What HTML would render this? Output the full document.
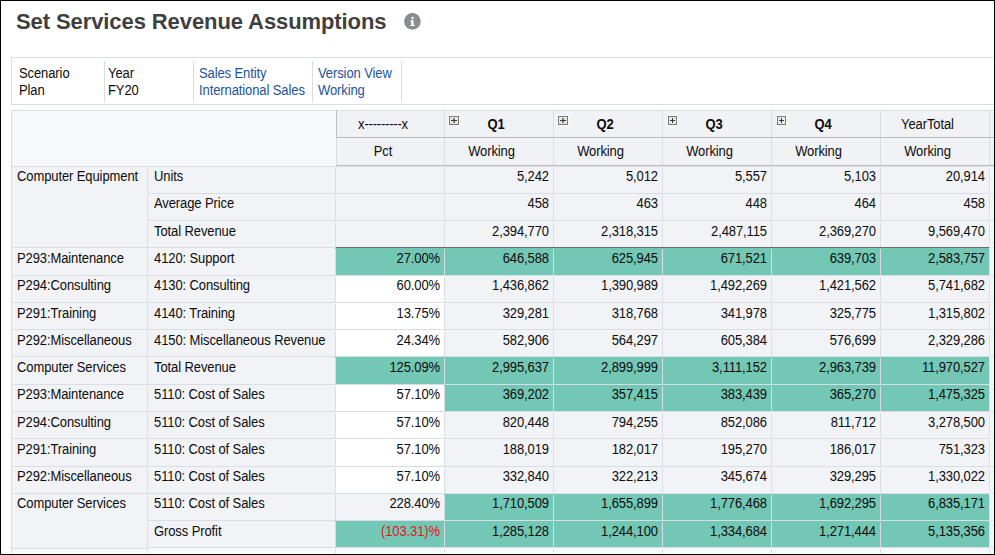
<!DOCTYPE html>
<html><head><meta charset="utf-8"><style>
html,body{margin:0;padding:0;}
body{width:995px;height:555px;overflow:hidden;position:relative;background:#fff;font-family:"Liberation Sans", sans-serif;}
.a{position:absolute;}
.t{position:absolute;white-space:nowrap;}
#frame{position:absolute;left:0;top:0;width:995px;height:555px;box-sizing:border-box;border:1px solid #000;pointer-events:none;z-index:10;}
</style></head><body>
<div class="t" style="top:8.88px;font-size:22px;line-height:25px;font-weight:700;color:#3f3f3f;left:16px;letter-spacing:-0.09px;">Set Services Revenue Assumptions</div>
<svg class="a" style="left:403px;top:12px" width="19" height="19" viewBox="0 0 19 19"><circle cx="9.4" cy="9.4" r="8.3" fill="#898c90"/><circle cx="9.5" cy="6.0" r="1.2" fill="#fff"/><path d="M7.3 8.2H10.6V13H11.9V14.1H7.1V13H8.2V9.3H7.3Z" fill="#fff"/></svg>
<div class="a" style="left:11px;top:57px;width:990px;height:48px;background:#fff;box-sizing:border-box;border:1px solid #d7dee6;"></div>
<div class="a" style="left:104px;top:61px;width:1px;height:41px;background:#d7dee6;"></div>
<div class="a" style="left:193px;top:61px;width:1px;height:41px;background:#d7dee6;"></div>
<div class="a" style="left:312px;top:61px;width:1px;height:41px;background:#d7dee6;"></div>
<div class="a" style="left:401px;top:61px;width:1px;height:41px;background:#d7dee6;"></div>
<div class="t" style="top:66.00px;font-size:13px;line-height:15px;font-weight:400;color:#0c0c0c;letter-spacing:-0.1px;transform:scaleY(1.07);transform-origin:0 12.00px;left:19px;">Scenario</div>
<div class="t" style="top:83.00px;font-size:13px;line-height:15px;font-weight:400;color:#0c0c0c;letter-spacing:-0.1px;transform:scaleY(1.07);transform-origin:0 12.00px;left:19px;">Plan</div>
<div class="t" style="top:66.00px;font-size:13px;line-height:15px;font-weight:400;color:#0c0c0c;letter-spacing:-0.1px;transform:scaleY(1.07);transform-origin:0 12.00px;left:108px;">Year</div>
<div class="t" style="top:83.00px;font-size:13px;line-height:15px;font-weight:400;color:#0c0c0c;letter-spacing:-0.1px;transform:scaleY(1.07);transform-origin:0 12.00px;left:108px;">FY20</div>
<div class="t" style="top:66.00px;font-size:13px;line-height:15px;font-weight:400;color:#1c52a0;letter-spacing:-0.1px;transform:scaleY(1.07);transform-origin:0 12.00px;left:199px;">Sales Entity</div>
<div class="t" style="top:83.00px;font-size:13px;line-height:15px;font-weight:400;color:#1c52a0;letter-spacing:-0.1px;transform:scaleY(1.07);transform-origin:0 12.00px;left:199px;">International Sales</div>
<div class="t" style="top:66.00px;font-size:13px;line-height:15px;font-weight:400;color:#1c52a0;letter-spacing:-0.1px;transform:scaleY(1.07);transform-origin:0 12.00px;left:318px;">Version View</div>
<div class="t" style="top:83.00px;font-size:13px;line-height:15px;font-weight:400;color:#1c52a0;letter-spacing:-0.1px;transform:scaleY(1.07);transform-origin:0 12.00px;left:318px;">Working</div>
<div class="a" style="left:11px;top:110px;width:325px;height:56px;background:#f6f8fb;box-sizing:border-box;border-top:1px solid #d7dee6;border-left:1px solid #d7dee6;"></div>
<div class="a" style="left:336px;top:110px;width:659px;height:55px;background:#f1f2f6;box-sizing:border-box;border-top:1px solid #d7dee6;"></div>
<div class="a" style="left:336px;top:137px;width:659px;height:1px;background:#bdbdbd;"></div>
<div class="a" style="left:336px;top:165px;width:659px;height:1px;background:#bdbdbd;"></div>
<div class="a" style="left:11px;top:166px;width:984px;height:1px;background:#d7dee6;"></div>
<div class="a" style="left:336px;top:110px;width:1px;height:27px;background:#bdbdbd;"></div>
<div class="a" style="left:336px;top:138px;width:1px;height:27px;background:#d7dee6;"></div>
<div class="a" style="left:444px;top:111px;width:1px;height:26px;background:#d7dee6;"></div>
<div class="a" style="left:444px;top:138px;width:1px;height:27px;background:#d7dee6;"></div>
<div class="a" style="left:553px;top:111px;width:1px;height:26px;background:#d7dee6;"></div>
<div class="a" style="left:553px;top:138px;width:1px;height:27px;background:#d7dee6;"></div>
<div class="a" style="left:662px;top:111px;width:1px;height:26px;background:#d7dee6;"></div>
<div class="a" style="left:662px;top:138px;width:1px;height:27px;background:#d7dee6;"></div>
<div class="a" style="left:771px;top:111px;width:1px;height:26px;background:#d7dee6;"></div>
<div class="a" style="left:771px;top:138px;width:1px;height:27px;background:#d7dee6;"></div>
<div class="a" style="left:880px;top:111px;width:1px;height:26px;background:#d7dee6;"></div>
<div class="a" style="left:880px;top:138px;width:1px;height:27px;background:#d7dee6;"></div>
<div class="a" style="left:989px;top:111px;width:1px;height:26px;background:#d7dee6;"></div>
<div class="a" style="left:989px;top:138px;width:1px;height:27px;background:#d7dee6;"></div>
<div class="t" style="top:117.00px;font-size:13px;line-height:15px;font-weight:400;color:#0c0c0c;letter-spacing:-0.1px;transform:scaleY(1.07);transform-origin:0 12.00px;left:183.0px;width:400px;text-align:center;letter-spacing:-0.2px;">x---------x</div>
<div class="t" style="top:144.00px;font-size:13px;line-height:15px;font-weight:400;color:#0c0c0c;letter-spacing:-0.1px;transform:scaleY(1.07);transform-origin:0 12.00px;left:183.0px;width:400px;text-align:center;">Pct</div>
<div class="t" style="top:117.00px;font-size:13px;line-height:15px;font-weight:700;color:#0c0c0c;letter-spacing:-0.1px;transform:scaleY(1.07);transform-origin:0 12.00px;left:296.0px;width:400px;text-align:center;">Q1</div>
<div class="a" style="left:448px;top:115px;width:12px;height:11px;background:#f8f9fb;"></div>
<div class="a" style="left:449px;top:116px;width:10px;height:9px;background:#787878;"></div>
<div class="a" style="left:450px;top:117px;width:8px;height:7px;background:#e9e9e1;"></div>
<div class="a" style="left:453px;top:118px;width:2px;height:5px;background:#7c7c78;"></div>
<div class="a" style="left:451px;top:120px;width:6px;height:1px;background:#3a3a3a;"></div>
<div class="t" style="top:144.00px;font-size:13px;line-height:15px;font-weight:400;color:#0c0c0c;letter-spacing:-0.1px;transform:scaleY(1.07);transform-origin:0 12.00px;left:291.5px;width:400px;text-align:center;">Working</div>
<div class="t" style="top:117.00px;font-size:13px;line-height:15px;font-weight:700;color:#0c0c0c;letter-spacing:-0.1px;transform:scaleY(1.07);transform-origin:0 12.00px;left:405.0px;width:400px;text-align:center;">Q2</div>
<div class="a" style="left:557px;top:115px;width:12px;height:11px;background:#f8f9fb;"></div>
<div class="a" style="left:558px;top:116px;width:10px;height:9px;background:#787878;"></div>
<div class="a" style="left:559px;top:117px;width:8px;height:7px;background:#e9e9e1;"></div>
<div class="a" style="left:562px;top:118px;width:2px;height:5px;background:#7c7c78;"></div>
<div class="a" style="left:560px;top:120px;width:6px;height:1px;background:#3a3a3a;"></div>
<div class="t" style="top:144.00px;font-size:13px;line-height:15px;font-weight:400;color:#0c0c0c;letter-spacing:-0.1px;transform:scaleY(1.07);transform-origin:0 12.00px;left:400.5px;width:400px;text-align:center;">Working</div>
<div class="t" style="top:117.00px;font-size:13px;line-height:15px;font-weight:700;color:#0c0c0c;letter-spacing:-0.1px;transform:scaleY(1.07);transform-origin:0 12.00px;left:514.0px;width:400px;text-align:center;">Q3</div>
<div class="a" style="left:667px;top:115px;width:11px;height:11px;background:#f8f9fb;"></div>
<div class="a" style="left:668px;top:116px;width:9px;height:9px;background:#787878;"></div>
<div class="a" style="left:669px;top:117px;width:7px;height:7px;background:#ebebe3;"></div>
<div class="a" style="left:672px;top:118px;width:1px;height:5px;background:#3a3a3a;"></div>
<div class="a" style="left:670px;top:120px;width:5px;height:1px;background:#3a3a3a;"></div>
<div class="t" style="top:144.00px;font-size:13px;line-height:15px;font-weight:400;color:#0c0c0c;letter-spacing:-0.1px;transform:scaleY(1.07);transform-origin:0 12.00px;left:509.5px;width:400px;text-align:center;">Working</div>
<div class="t" style="top:117.00px;font-size:13px;line-height:15px;font-weight:700;color:#0c0c0c;letter-spacing:-0.1px;transform:scaleY(1.07);transform-origin:0 12.00px;left:623.0px;width:400px;text-align:center;">Q4</div>
<div class="a" style="left:776px;top:115px;width:11px;height:11px;background:#f8f9fb;"></div>
<div class="a" style="left:777px;top:116px;width:9px;height:9px;background:#787878;"></div>
<div class="a" style="left:778px;top:117px;width:7px;height:7px;background:#ebebe3;"></div>
<div class="a" style="left:781px;top:118px;width:1px;height:5px;background:#3a3a3a;"></div>
<div class="a" style="left:779px;top:120px;width:5px;height:1px;background:#3a3a3a;"></div>
<div class="t" style="top:144.00px;font-size:13px;line-height:15px;font-weight:400;color:#0c0c0c;letter-spacing:-0.1px;transform:scaleY(1.07);transform-origin:0 12.00px;left:618.5px;width:400px;text-align:center;">Working</div>
<div class="t" style="top:117.00px;font-size:13px;line-height:15px;font-weight:400;color:#0c0c0c;letter-spacing:-0.1px;transform:scaleY(1.07);transform-origin:0 12.00px;left:727.5px;width:400px;text-align:center;">YearTotal</div>
<div class="t" style="top:144.00px;font-size:13px;line-height:15px;font-weight:400;color:#0c0c0c;letter-spacing:-0.1px;transform:scaleY(1.07);transform-origin:0 12.00px;left:727.5px;width:400px;text-align:center;">Working</div>
<div class="a" style="left:11px;top:167px;width:325px;height:381px;background:#f2f3f7;box-sizing:border-box;border-left:1px solid #d7dee6;"></div>
<div class="a" style="left:147px;top:168px;width:1px;height:25px;background:#d7dee6;"></div>
<div class="a" style="left:147px;top:195px;width:1px;height:25px;background:#d7dee6;"></div>
<div class="a" style="left:147px;top:222px;width:1px;height:25px;background:#d7dee6;"></div>
<div class="a" style="left:147px;top:249px;width:1px;height:26px;background:#d7dee6;"></div>
<div class="a" style="left:147px;top:277px;width:1px;height:25px;background:#d7dee6;"></div>
<div class="a" style="left:147px;top:304px;width:1px;height:25px;background:#d7dee6;"></div>
<div class="a" style="left:147px;top:331px;width:1px;height:25px;background:#d7dee6;"></div>
<div class="a" style="left:147px;top:358px;width:1px;height:26px;background:#d7dee6;"></div>
<div class="a" style="left:147px;top:386px;width:1px;height:25px;background:#d7dee6;"></div>
<div class="a" style="left:147px;top:413px;width:1px;height:25px;background:#d7dee6;"></div>
<div class="a" style="left:147px;top:440px;width:1px;height:26px;background:#d7dee6;"></div>
<div class="a" style="left:147px;top:468px;width:1px;height:25px;background:#d7dee6;"></div>
<div class="a" style="left:147px;top:495px;width:1px;height:25px;background:#d7dee6;"></div>
<div class="a" style="left:147px;top:522px;width:1px;height:25px;background:#d7dee6;"></div>
<div class="a" style="left:147px;top:193px;width:848px;height:1px;background:#d7dee6;"></div>
<div class="a" style="left:335px;top:167px;width:109px;height:26px;background:#f2f3f7;"></div>
<div class="a" style="left:444px;top:167px;width:109px;height:26px;background:#f2f3f7;"></div>
<div class="a" style="left:553px;top:167px;width:109px;height:26px;background:#f2f3f7;"></div>
<div class="a" style="left:662px;top:167px;width:109px;height:26px;background:#f2f3f7;"></div>
<div class="a" style="left:771px;top:167px;width:109px;height:26px;background:#f2f3f7;"></div>
<div class="a" style="left:880px;top:167px;width:109px;height:26px;background:#f2f3f7;"></div>
<div class="a" style="left:335px;top:168px;width:1px;height:25px;background:#d7dee6;"></div>
<div class="a" style="left:444px;top:168px;width:1px;height:25px;background:#d7dee6;"></div>
<div class="a" style="left:553px;top:168px;width:1px;height:25px;background:#d7dee6;"></div>
<div class="a" style="left:662px;top:168px;width:1px;height:25px;background:#d7dee6;"></div>
<div class="a" style="left:771px;top:168px;width:1px;height:25px;background:#d7dee6;"></div>
<div class="a" style="left:880px;top:168px;width:1px;height:25px;background:#d7dee6;"></div>
<div class="a" style="left:989px;top:168px;width:1px;height:25px;background:#d7dee6;"></div>
<div class="t" style="top:169.00px;font-size:13px;line-height:15px;font-weight:400;color:#0c0c0c;letter-spacing:-0.1px;transform:scaleY(1.07);transform-origin:0 12.00px;left:17px;">Computer Equipment</div>
<div class="t" style="top:169.00px;font-size:13px;line-height:15px;font-weight:400;color:#0c0c0c;letter-spacing:-0.1px;transform:scaleY(1.07);transform-origin:0 12.00px;left:154px;">Units</div>
<div class="t" style="top:169.00px;font-size:13px;line-height:15px;font-weight:400;color:#0c0c0c;letter-spacing:-0.1px;transform:scaleY(1.07);transform-origin:0 12.00px;right:446px;text-align:right;">5,242</div>
<div class="t" style="top:169.00px;font-size:13px;line-height:15px;font-weight:400;color:#0c0c0c;letter-spacing:-0.1px;transform:scaleY(1.07);transform-origin:0 12.00px;right:337px;text-align:right;">5,012</div>
<div class="t" style="top:169.00px;font-size:13px;line-height:15px;font-weight:400;color:#0c0c0c;letter-spacing:-0.1px;transform:scaleY(1.07);transform-origin:0 12.00px;right:228px;text-align:right;">5,557</div>
<div class="t" style="top:169.00px;font-size:13px;line-height:15px;font-weight:400;color:#0c0c0c;letter-spacing:-0.1px;transform:scaleY(1.07);transform-origin:0 12.00px;right:119px;text-align:right;">5,103</div>
<div class="t" style="top:169.00px;font-size:13px;line-height:15px;font-weight:400;color:#0c0c0c;letter-spacing:-0.1px;transform:scaleY(1.07);transform-origin:0 12.00px;right:10px;text-align:right;">20,914</div>
<div class="a" style="left:147px;top:220px;width:848px;height:1px;background:#d7dee6;"></div>
<div class="a" style="left:335px;top:194px;width:109px;height:26px;background:#f2f3f7;"></div>
<div class="a" style="left:444px;top:194px;width:109px;height:26px;background:#f2f3f7;"></div>
<div class="a" style="left:553px;top:194px;width:109px;height:26px;background:#f2f3f7;"></div>
<div class="a" style="left:662px;top:194px;width:109px;height:26px;background:#f2f3f7;"></div>
<div class="a" style="left:771px;top:194px;width:109px;height:26px;background:#f2f3f7;"></div>
<div class="a" style="left:880px;top:194px;width:109px;height:26px;background:#f2f3f7;"></div>
<div class="a" style="left:335px;top:195px;width:1px;height:25px;background:#d7dee6;"></div>
<div class="a" style="left:444px;top:195px;width:1px;height:25px;background:#d7dee6;"></div>
<div class="a" style="left:553px;top:195px;width:1px;height:25px;background:#d7dee6;"></div>
<div class="a" style="left:662px;top:195px;width:1px;height:25px;background:#d7dee6;"></div>
<div class="a" style="left:771px;top:195px;width:1px;height:25px;background:#d7dee6;"></div>
<div class="a" style="left:880px;top:195px;width:1px;height:25px;background:#d7dee6;"></div>
<div class="a" style="left:989px;top:195px;width:1px;height:25px;background:#d7dee6;"></div>
<div class="t" style="top:196.00px;font-size:13px;line-height:15px;font-weight:400;color:#0c0c0c;letter-spacing:-0.1px;transform:scaleY(1.07);transform-origin:0 12.00px;left:154px;">Average Price</div>
<div class="t" style="top:196.00px;font-size:13px;line-height:15px;font-weight:400;color:#0c0c0c;letter-spacing:-0.1px;transform:scaleY(1.07);transform-origin:0 12.00px;right:446px;text-align:right;">458</div>
<div class="t" style="top:196.00px;font-size:13px;line-height:15px;font-weight:400;color:#0c0c0c;letter-spacing:-0.1px;transform:scaleY(1.07);transform-origin:0 12.00px;right:337px;text-align:right;">463</div>
<div class="t" style="top:196.00px;font-size:13px;line-height:15px;font-weight:400;color:#0c0c0c;letter-spacing:-0.1px;transform:scaleY(1.07);transform-origin:0 12.00px;right:228px;text-align:right;">448</div>
<div class="t" style="top:196.00px;font-size:13px;line-height:15px;font-weight:400;color:#0c0c0c;letter-spacing:-0.1px;transform:scaleY(1.07);transform-origin:0 12.00px;right:119px;text-align:right;">464</div>
<div class="t" style="top:196.00px;font-size:13px;line-height:15px;font-weight:400;color:#0c0c0c;letter-spacing:-0.1px;transform:scaleY(1.07);transform-origin:0 12.00px;right:10px;text-align:right;">458</div>
<div class="a" style="left:11px;top:247px;width:984px;height:1px;background:#d7dee6;"></div>
<div class="a" style="left:335px;top:221px;width:109px;height:26px;background:#f2f3f7;"></div>
<div class="a" style="left:444px;top:221px;width:109px;height:26px;background:#f2f3f7;"></div>
<div class="a" style="left:553px;top:221px;width:109px;height:26px;background:#f2f3f7;"></div>
<div class="a" style="left:662px;top:221px;width:109px;height:26px;background:#f2f3f7;"></div>
<div class="a" style="left:771px;top:221px;width:109px;height:26px;background:#f2f3f7;"></div>
<div class="a" style="left:880px;top:221px;width:109px;height:26px;background:#f2f3f7;"></div>
<div class="a" style="left:335px;top:222px;width:1px;height:25px;background:#d7dee6;"></div>
<div class="a" style="left:444px;top:222px;width:1px;height:25px;background:#d7dee6;"></div>
<div class="a" style="left:553px;top:222px;width:1px;height:25px;background:#d7dee6;"></div>
<div class="a" style="left:662px;top:222px;width:1px;height:25px;background:#d7dee6;"></div>
<div class="a" style="left:771px;top:222px;width:1px;height:25px;background:#d7dee6;"></div>
<div class="a" style="left:880px;top:222px;width:1px;height:25px;background:#d7dee6;"></div>
<div class="a" style="left:989px;top:222px;width:1px;height:25px;background:#d7dee6;"></div>
<div class="t" style="top:224.00px;font-size:13px;line-height:15px;font-weight:400;color:#0c0c0c;letter-spacing:-0.1px;transform:scaleY(1.07);transform-origin:0 12.00px;left:154px;">Total Revenue</div>
<div class="t" style="top:224.00px;font-size:13px;line-height:15px;font-weight:400;color:#0c0c0c;letter-spacing:-0.1px;transform:scaleY(1.07);transform-origin:0 12.00px;right:446px;text-align:right;">2,394,770</div>
<div class="t" style="top:224.00px;font-size:13px;line-height:15px;font-weight:400;color:#0c0c0c;letter-spacing:-0.1px;transform:scaleY(1.07);transform-origin:0 12.00px;right:337px;text-align:right;">2,318,315</div>
<div class="t" style="top:224.00px;font-size:13px;line-height:15px;font-weight:400;color:#0c0c0c;letter-spacing:-0.1px;transform:scaleY(1.07);transform-origin:0 12.00px;right:228px;text-align:right;">2,487,115</div>
<div class="t" style="top:224.00px;font-size:13px;line-height:15px;font-weight:400;color:#0c0c0c;letter-spacing:-0.1px;transform:scaleY(1.07);transform-origin:0 12.00px;right:119px;text-align:right;">2,369,270</div>
<div class="t" style="top:224.00px;font-size:13px;line-height:15px;font-weight:400;color:#0c0c0c;letter-spacing:-0.1px;transform:scaleY(1.07);transform-origin:0 12.00px;right:10px;text-align:right;">9,569,470</div>
<div class="a" style="left:11px;top:275px;width:984px;height:1px;background:#d7dee6;"></div>
<div class="a" style="left:335px;top:248px;width:109px;height:27px;background:#72c7b5;"></div>
<div class="a" style="left:444px;top:248px;width:109px;height:27px;background:#72c7b5;"></div>
<div class="a" style="left:553px;top:248px;width:109px;height:27px;background:#72c7b5;"></div>
<div class="a" style="left:662px;top:248px;width:109px;height:27px;background:#72c7b5;"></div>
<div class="a" style="left:771px;top:248px;width:109px;height:27px;background:#72c7b5;"></div>
<div class="a" style="left:880px;top:248px;width:109px;height:27px;background:#72c7b5;"></div>
<div class="a" style="left:335px;top:249px;width:1px;height:26px;background:#d7dee6;"></div>
<div class="a" style="left:444px;top:249px;width:1px;height:26px;background:#d7dee6;"></div>
<div class="a" style="left:553px;top:249px;width:1px;height:26px;background:#d7dee6;"></div>
<div class="a" style="left:662px;top:249px;width:1px;height:26px;background:#d7dee6;"></div>
<div class="a" style="left:771px;top:249px;width:1px;height:26px;background:#d7dee6;"></div>
<div class="a" style="left:880px;top:249px;width:1px;height:26px;background:#d7dee6;"></div>
<div class="a" style="left:989px;top:249px;width:1px;height:26px;background:#d7dee6;"></div>
<div class="t" style="top:251.00px;font-size:13px;line-height:15px;font-weight:400;color:#0c0c0c;letter-spacing:-0.1px;transform:scaleY(1.07);transform-origin:0 12.00px;left:17px;">P293:Maintenance</div>
<div class="t" style="top:251.00px;font-size:13px;line-height:15px;font-weight:400;color:#0c0c0c;letter-spacing:-0.1px;transform:scaleY(1.07);transform-origin:0 12.00px;left:154px;">4120: Support</div>
<div class="t" style="top:251.00px;font-size:13px;line-height:15px;font-weight:400;color:#0c0c0c;letter-spacing:-0.1px;transform:scaleY(1.07);transform-origin:0 12.00px;right:555px;text-align:right;">27.00%</div>
<div class="t" style="top:251.00px;font-size:13px;line-height:15px;font-weight:400;color:#0c0c0c;letter-spacing:-0.1px;transform:scaleY(1.07);transform-origin:0 12.00px;right:446px;text-align:right;">646,588</div>
<div class="t" style="top:251.00px;font-size:13px;line-height:15px;font-weight:400;color:#0c0c0c;letter-spacing:-0.1px;transform:scaleY(1.07);transform-origin:0 12.00px;right:337px;text-align:right;">625,945</div>
<div class="t" style="top:251.00px;font-size:13px;line-height:15px;font-weight:400;color:#0c0c0c;letter-spacing:-0.1px;transform:scaleY(1.07);transform-origin:0 12.00px;right:228px;text-align:right;">671,521</div>
<div class="t" style="top:251.00px;font-size:13px;line-height:15px;font-weight:400;color:#0c0c0c;letter-spacing:-0.1px;transform:scaleY(1.07);transform-origin:0 12.00px;right:119px;text-align:right;">639,703</div>
<div class="t" style="top:251.00px;font-size:13px;line-height:15px;font-weight:400;color:#0c0c0c;letter-spacing:-0.1px;transform:scaleY(1.07);transform-origin:0 12.00px;right:10px;text-align:right;">2,583,757</div>
<div class="a" style="left:11px;top:302px;width:984px;height:1px;background:#d7dee6;"></div>
<div class="a" style="left:335px;top:276px;width:109px;height:26px;background:#ffffff;"></div>
<div class="a" style="left:444px;top:276px;width:109px;height:26px;background:#f2f3f7;"></div>
<div class="a" style="left:553px;top:276px;width:109px;height:26px;background:#f2f3f7;"></div>
<div class="a" style="left:662px;top:276px;width:109px;height:26px;background:#f2f3f7;"></div>
<div class="a" style="left:771px;top:276px;width:109px;height:26px;background:#f2f3f7;"></div>
<div class="a" style="left:880px;top:276px;width:109px;height:26px;background:#f2f3f7;"></div>
<div class="a" style="left:335px;top:277px;width:1px;height:25px;background:#d7dee6;"></div>
<div class="a" style="left:444px;top:277px;width:1px;height:25px;background:#d7dee6;"></div>
<div class="a" style="left:553px;top:277px;width:1px;height:25px;background:#d7dee6;"></div>
<div class="a" style="left:662px;top:277px;width:1px;height:25px;background:#d7dee6;"></div>
<div class="a" style="left:771px;top:277px;width:1px;height:25px;background:#d7dee6;"></div>
<div class="a" style="left:880px;top:277px;width:1px;height:25px;background:#d7dee6;"></div>
<div class="a" style="left:989px;top:277px;width:1px;height:25px;background:#d7dee6;"></div>
<div class="t" style="top:278.00px;font-size:13px;line-height:15px;font-weight:400;color:#0c0c0c;letter-spacing:-0.1px;transform:scaleY(1.07);transform-origin:0 12.00px;left:17px;">P294:Consulting</div>
<div class="t" style="top:278.00px;font-size:13px;line-height:15px;font-weight:400;color:#0c0c0c;letter-spacing:-0.1px;transform:scaleY(1.07);transform-origin:0 12.00px;left:154px;">4130: Consulting</div>
<div class="t" style="top:278.00px;font-size:13px;line-height:15px;font-weight:400;color:#0c0c0c;letter-spacing:-0.1px;transform:scaleY(1.07);transform-origin:0 12.00px;right:555px;text-align:right;">60.00%</div>
<div class="t" style="top:278.00px;font-size:13px;line-height:15px;font-weight:400;color:#0c0c0c;letter-spacing:-0.1px;transform:scaleY(1.07);transform-origin:0 12.00px;right:446px;text-align:right;">1,436,862</div>
<div class="t" style="top:278.00px;font-size:13px;line-height:15px;font-weight:400;color:#0c0c0c;letter-spacing:-0.1px;transform:scaleY(1.07);transform-origin:0 12.00px;right:337px;text-align:right;">1,390,989</div>
<div class="t" style="top:278.00px;font-size:13px;line-height:15px;font-weight:400;color:#0c0c0c;letter-spacing:-0.1px;transform:scaleY(1.07);transform-origin:0 12.00px;right:228px;text-align:right;">1,492,269</div>
<div class="t" style="top:278.00px;font-size:13px;line-height:15px;font-weight:400;color:#0c0c0c;letter-spacing:-0.1px;transform:scaleY(1.07);transform-origin:0 12.00px;right:119px;text-align:right;">1,421,562</div>
<div class="t" style="top:278.00px;font-size:13px;line-height:15px;font-weight:400;color:#0c0c0c;letter-spacing:-0.1px;transform:scaleY(1.07);transform-origin:0 12.00px;right:10px;text-align:right;">5,741,682</div>
<div class="a" style="left:11px;top:329px;width:984px;height:1px;background:#d7dee6;"></div>
<div class="a" style="left:335px;top:303px;width:109px;height:26px;background:#ffffff;"></div>
<div class="a" style="left:444px;top:303px;width:109px;height:26px;background:#f2f3f7;"></div>
<div class="a" style="left:553px;top:303px;width:109px;height:26px;background:#f2f3f7;"></div>
<div class="a" style="left:662px;top:303px;width:109px;height:26px;background:#f2f3f7;"></div>
<div class="a" style="left:771px;top:303px;width:109px;height:26px;background:#f2f3f7;"></div>
<div class="a" style="left:880px;top:303px;width:109px;height:26px;background:#f2f3f7;"></div>
<div class="a" style="left:335px;top:304px;width:1px;height:25px;background:#d7dee6;"></div>
<div class="a" style="left:444px;top:304px;width:1px;height:25px;background:#d7dee6;"></div>
<div class="a" style="left:553px;top:304px;width:1px;height:25px;background:#d7dee6;"></div>
<div class="a" style="left:662px;top:304px;width:1px;height:25px;background:#d7dee6;"></div>
<div class="a" style="left:771px;top:304px;width:1px;height:25px;background:#d7dee6;"></div>
<div class="a" style="left:880px;top:304px;width:1px;height:25px;background:#d7dee6;"></div>
<div class="a" style="left:989px;top:304px;width:1px;height:25px;background:#d7dee6;"></div>
<div class="t" style="top:306.00px;font-size:13px;line-height:15px;font-weight:400;color:#0c0c0c;letter-spacing:-0.1px;transform:scaleY(1.07);transform-origin:0 12.00px;left:17px;">P291:Training</div>
<div class="t" style="top:306.00px;font-size:13px;line-height:15px;font-weight:400;color:#0c0c0c;letter-spacing:-0.1px;transform:scaleY(1.07);transform-origin:0 12.00px;left:154px;">4140: Training</div>
<div class="t" style="top:306.00px;font-size:13px;line-height:15px;font-weight:400;color:#0c0c0c;letter-spacing:-0.1px;transform:scaleY(1.07);transform-origin:0 12.00px;right:555px;text-align:right;">13.75%</div>
<div class="t" style="top:306.00px;font-size:13px;line-height:15px;font-weight:400;color:#0c0c0c;letter-spacing:-0.1px;transform:scaleY(1.07);transform-origin:0 12.00px;right:446px;text-align:right;">329,281</div>
<div class="t" style="top:306.00px;font-size:13px;line-height:15px;font-weight:400;color:#0c0c0c;letter-spacing:-0.1px;transform:scaleY(1.07);transform-origin:0 12.00px;right:337px;text-align:right;">318,768</div>
<div class="t" style="top:306.00px;font-size:13px;line-height:15px;font-weight:400;color:#0c0c0c;letter-spacing:-0.1px;transform:scaleY(1.07);transform-origin:0 12.00px;right:228px;text-align:right;">341,978</div>
<div class="t" style="top:306.00px;font-size:13px;line-height:15px;font-weight:400;color:#0c0c0c;letter-spacing:-0.1px;transform:scaleY(1.07);transform-origin:0 12.00px;right:119px;text-align:right;">325,775</div>
<div class="t" style="top:306.00px;font-size:13px;line-height:15px;font-weight:400;color:#0c0c0c;letter-spacing:-0.1px;transform:scaleY(1.07);transform-origin:0 12.00px;right:10px;text-align:right;">1,315,802</div>
<div class="a" style="left:11px;top:356px;width:984px;height:1px;background:#d7dee6;"></div>
<div class="a" style="left:335px;top:330px;width:109px;height:26px;background:#ffffff;"></div>
<div class="a" style="left:444px;top:330px;width:109px;height:26px;background:#f2f3f7;"></div>
<div class="a" style="left:553px;top:330px;width:109px;height:26px;background:#f2f3f7;"></div>
<div class="a" style="left:662px;top:330px;width:109px;height:26px;background:#f2f3f7;"></div>
<div class="a" style="left:771px;top:330px;width:109px;height:26px;background:#f2f3f7;"></div>
<div class="a" style="left:880px;top:330px;width:109px;height:26px;background:#f2f3f7;"></div>
<div class="a" style="left:335px;top:331px;width:1px;height:25px;background:#d7dee6;"></div>
<div class="a" style="left:444px;top:331px;width:1px;height:25px;background:#d7dee6;"></div>
<div class="a" style="left:553px;top:331px;width:1px;height:25px;background:#d7dee6;"></div>
<div class="a" style="left:662px;top:331px;width:1px;height:25px;background:#d7dee6;"></div>
<div class="a" style="left:771px;top:331px;width:1px;height:25px;background:#d7dee6;"></div>
<div class="a" style="left:880px;top:331px;width:1px;height:25px;background:#d7dee6;"></div>
<div class="a" style="left:989px;top:331px;width:1px;height:25px;background:#d7dee6;"></div>
<div class="t" style="top:333.00px;font-size:13px;line-height:15px;font-weight:400;color:#0c0c0c;letter-spacing:-0.1px;transform:scaleY(1.07);transform-origin:0 12.00px;left:17px;">P292:Miscellaneous</div>
<div class="t" style="top:333.00px;font-size:13px;line-height:15px;font-weight:400;color:#0c0c0c;letter-spacing:-0.1px;transform:scaleY(1.07);transform-origin:0 12.00px;left:154px;">4150: Miscellaneous Revenue</div>
<div class="t" style="top:333.00px;font-size:13px;line-height:15px;font-weight:400;color:#0c0c0c;letter-spacing:-0.1px;transform:scaleY(1.07);transform-origin:0 12.00px;right:555px;text-align:right;">24.34%</div>
<div class="t" style="top:333.00px;font-size:13px;line-height:15px;font-weight:400;color:#0c0c0c;letter-spacing:-0.1px;transform:scaleY(1.07);transform-origin:0 12.00px;right:446px;text-align:right;">582,906</div>
<div class="t" style="top:333.00px;font-size:13px;line-height:15px;font-weight:400;color:#0c0c0c;letter-spacing:-0.1px;transform:scaleY(1.07);transform-origin:0 12.00px;right:337px;text-align:right;">564,297</div>
<div class="t" style="top:333.00px;font-size:13px;line-height:15px;font-weight:400;color:#0c0c0c;letter-spacing:-0.1px;transform:scaleY(1.07);transform-origin:0 12.00px;right:228px;text-align:right;">605,384</div>
<div class="t" style="top:333.00px;font-size:13px;line-height:15px;font-weight:400;color:#0c0c0c;letter-spacing:-0.1px;transform:scaleY(1.07);transform-origin:0 12.00px;right:119px;text-align:right;">576,699</div>
<div class="t" style="top:333.00px;font-size:13px;line-height:15px;font-weight:400;color:#0c0c0c;letter-spacing:-0.1px;transform:scaleY(1.07);transform-origin:0 12.00px;right:10px;text-align:right;">2,329,286</div>
<div class="a" style="left:11px;top:384px;width:984px;height:1px;background:#d7dee6;"></div>
<div class="a" style="left:335px;top:357px;width:109px;height:27px;background:#72c7b5;"></div>
<div class="a" style="left:444px;top:357px;width:109px;height:27px;background:#72c7b5;"></div>
<div class="a" style="left:553px;top:357px;width:109px;height:27px;background:#72c7b5;"></div>
<div class="a" style="left:662px;top:357px;width:109px;height:27px;background:#72c7b5;"></div>
<div class="a" style="left:771px;top:357px;width:109px;height:27px;background:#72c7b5;"></div>
<div class="a" style="left:880px;top:357px;width:109px;height:27px;background:#72c7b5;"></div>
<div class="a" style="left:335px;top:358px;width:1px;height:26px;background:#d7dee6;"></div>
<div class="a" style="left:444px;top:358px;width:1px;height:26px;background:#d7dee6;"></div>
<div class="a" style="left:553px;top:358px;width:1px;height:26px;background:#d7dee6;"></div>
<div class="a" style="left:662px;top:358px;width:1px;height:26px;background:#d7dee6;"></div>
<div class="a" style="left:771px;top:358px;width:1px;height:26px;background:#d7dee6;"></div>
<div class="a" style="left:880px;top:358px;width:1px;height:26px;background:#d7dee6;"></div>
<div class="a" style="left:989px;top:358px;width:1px;height:26px;background:#d7dee6;"></div>
<div class="t" style="top:360.00px;font-size:13px;line-height:15px;font-weight:400;color:#0c0c0c;letter-spacing:-0.1px;transform:scaleY(1.07);transform-origin:0 12.00px;left:17px;">Computer Services</div>
<div class="t" style="top:360.00px;font-size:13px;line-height:15px;font-weight:400;color:#0c0c0c;letter-spacing:-0.1px;transform:scaleY(1.07);transform-origin:0 12.00px;left:154px;">Total Revenue</div>
<div class="t" style="top:360.00px;font-size:13px;line-height:15px;font-weight:400;color:#0c0c0c;letter-spacing:-0.1px;transform:scaleY(1.07);transform-origin:0 12.00px;right:555px;text-align:right;">125.09%</div>
<div class="t" style="top:360.00px;font-size:13px;line-height:15px;font-weight:400;color:#0c0c0c;letter-spacing:-0.1px;transform:scaleY(1.07);transform-origin:0 12.00px;right:446px;text-align:right;">2,995,637</div>
<div class="t" style="top:360.00px;font-size:13px;line-height:15px;font-weight:400;color:#0c0c0c;letter-spacing:-0.1px;transform:scaleY(1.07);transform-origin:0 12.00px;right:337px;text-align:right;">2,899,999</div>
<div class="t" style="top:360.00px;font-size:13px;line-height:15px;font-weight:400;color:#0c0c0c;letter-spacing:-0.1px;transform:scaleY(1.07);transform-origin:0 12.00px;right:228px;text-align:right;">3,111,152</div>
<div class="t" style="top:360.00px;font-size:13px;line-height:15px;font-weight:400;color:#0c0c0c;letter-spacing:-0.1px;transform:scaleY(1.07);transform-origin:0 12.00px;right:119px;text-align:right;">2,963,739</div>
<div class="t" style="top:360.00px;font-size:13px;line-height:15px;font-weight:400;color:#0c0c0c;letter-spacing:-0.1px;transform:scaleY(1.07);transform-origin:0 12.00px;right:10px;text-align:right;">11,970,527</div>
<div class="a" style="left:11px;top:411px;width:984px;height:1px;background:#d7dee6;"></div>
<div class="a" style="left:335px;top:385px;width:109px;height:26px;background:#ffffff;"></div>
<div class="a" style="left:444px;top:385px;width:109px;height:26px;background:#72c7b5;"></div>
<div class="a" style="left:553px;top:385px;width:109px;height:26px;background:#72c7b5;"></div>
<div class="a" style="left:662px;top:385px;width:109px;height:26px;background:#72c7b5;"></div>
<div class="a" style="left:771px;top:385px;width:109px;height:26px;background:#72c7b5;"></div>
<div class="a" style="left:880px;top:385px;width:109px;height:26px;background:#72c7b5;"></div>
<div class="a" style="left:335px;top:386px;width:1px;height:25px;background:#d7dee6;"></div>
<div class="a" style="left:444px;top:386px;width:1px;height:25px;background:#d7dee6;"></div>
<div class="a" style="left:553px;top:386px;width:1px;height:25px;background:#d7dee6;"></div>
<div class="a" style="left:662px;top:386px;width:1px;height:25px;background:#d7dee6;"></div>
<div class="a" style="left:771px;top:386px;width:1px;height:25px;background:#d7dee6;"></div>
<div class="a" style="left:880px;top:386px;width:1px;height:25px;background:#d7dee6;"></div>
<div class="a" style="left:989px;top:386px;width:1px;height:25px;background:#d7dee6;"></div>
<div class="t" style="top:387.00px;font-size:13px;line-height:15px;font-weight:400;color:#0c0c0c;letter-spacing:-0.1px;transform:scaleY(1.07);transform-origin:0 12.00px;left:17px;">P293:Maintenance</div>
<div class="t" style="top:387.00px;font-size:13px;line-height:15px;font-weight:400;color:#0c0c0c;letter-spacing:-0.1px;transform:scaleY(1.07);transform-origin:0 12.00px;left:154px;">5110: Cost of Sales</div>
<div class="t" style="top:387.00px;font-size:13px;line-height:15px;font-weight:400;color:#0c0c0c;letter-spacing:-0.1px;transform:scaleY(1.07);transform-origin:0 12.00px;right:555px;text-align:right;">57.10%</div>
<div class="t" style="top:387.00px;font-size:13px;line-height:15px;font-weight:400;color:#0c0c0c;letter-spacing:-0.1px;transform:scaleY(1.07);transform-origin:0 12.00px;right:446px;text-align:right;">369,202</div>
<div class="t" style="top:387.00px;font-size:13px;line-height:15px;font-weight:400;color:#0c0c0c;letter-spacing:-0.1px;transform:scaleY(1.07);transform-origin:0 12.00px;right:337px;text-align:right;">357,415</div>
<div class="t" style="top:387.00px;font-size:13px;line-height:15px;font-weight:400;color:#0c0c0c;letter-spacing:-0.1px;transform:scaleY(1.07);transform-origin:0 12.00px;right:228px;text-align:right;">383,439</div>
<div class="t" style="top:387.00px;font-size:13px;line-height:15px;font-weight:400;color:#0c0c0c;letter-spacing:-0.1px;transform:scaleY(1.07);transform-origin:0 12.00px;right:119px;text-align:right;">365,270</div>
<div class="t" style="top:387.00px;font-size:13px;line-height:15px;font-weight:400;color:#0c0c0c;letter-spacing:-0.1px;transform:scaleY(1.07);transform-origin:0 12.00px;right:10px;text-align:right;">1,475,325</div>
<div class="a" style="left:11px;top:438px;width:984px;height:1px;background:#d7dee6;"></div>
<div class="a" style="left:335px;top:412px;width:109px;height:26px;background:#ffffff;"></div>
<div class="a" style="left:444px;top:412px;width:109px;height:26px;background:#f2f3f7;"></div>
<div class="a" style="left:553px;top:412px;width:109px;height:26px;background:#f2f3f7;"></div>
<div class="a" style="left:662px;top:412px;width:109px;height:26px;background:#f2f3f7;"></div>
<div class="a" style="left:771px;top:412px;width:109px;height:26px;background:#f2f3f7;"></div>
<div class="a" style="left:880px;top:412px;width:109px;height:26px;background:#f2f3f7;"></div>
<div class="a" style="left:335px;top:413px;width:1px;height:25px;background:#d7dee6;"></div>
<div class="a" style="left:444px;top:413px;width:1px;height:25px;background:#d7dee6;"></div>
<div class="a" style="left:553px;top:413px;width:1px;height:25px;background:#d7dee6;"></div>
<div class="a" style="left:662px;top:413px;width:1px;height:25px;background:#d7dee6;"></div>
<div class="a" style="left:771px;top:413px;width:1px;height:25px;background:#d7dee6;"></div>
<div class="a" style="left:880px;top:413px;width:1px;height:25px;background:#d7dee6;"></div>
<div class="a" style="left:989px;top:413px;width:1px;height:25px;background:#d7dee6;"></div>
<div class="t" style="top:415.00px;font-size:13px;line-height:15px;font-weight:400;color:#0c0c0c;letter-spacing:-0.1px;transform:scaleY(1.07);transform-origin:0 12.00px;left:17px;">P294:Consulting</div>
<div class="t" style="top:415.00px;font-size:13px;line-height:15px;font-weight:400;color:#0c0c0c;letter-spacing:-0.1px;transform:scaleY(1.07);transform-origin:0 12.00px;left:154px;">5110: Cost of Sales</div>
<div class="t" style="top:415.00px;font-size:13px;line-height:15px;font-weight:400;color:#0c0c0c;letter-spacing:-0.1px;transform:scaleY(1.07);transform-origin:0 12.00px;right:555px;text-align:right;">57.10%</div>
<div class="t" style="top:415.00px;font-size:13px;line-height:15px;font-weight:400;color:#0c0c0c;letter-spacing:-0.1px;transform:scaleY(1.07);transform-origin:0 12.00px;right:446px;text-align:right;">820,448</div>
<div class="t" style="top:415.00px;font-size:13px;line-height:15px;font-weight:400;color:#0c0c0c;letter-spacing:-0.1px;transform:scaleY(1.07);transform-origin:0 12.00px;right:337px;text-align:right;">794,255</div>
<div class="t" style="top:415.00px;font-size:13px;line-height:15px;font-weight:400;color:#0c0c0c;letter-spacing:-0.1px;transform:scaleY(1.07);transform-origin:0 12.00px;right:228px;text-align:right;">852,086</div>
<div class="t" style="top:415.00px;font-size:13px;line-height:15px;font-weight:400;color:#0c0c0c;letter-spacing:-0.1px;transform:scaleY(1.07);transform-origin:0 12.00px;right:119px;text-align:right;">811,712</div>
<div class="t" style="top:415.00px;font-size:13px;line-height:15px;font-weight:400;color:#0c0c0c;letter-spacing:-0.1px;transform:scaleY(1.07);transform-origin:0 12.00px;right:10px;text-align:right;">3,278,500</div>
<div class="a" style="left:11px;top:466px;width:984px;height:1px;background:#d7dee6;"></div>
<div class="a" style="left:335px;top:439px;width:109px;height:27px;background:#ffffff;"></div>
<div class="a" style="left:444px;top:439px;width:109px;height:27px;background:#f2f3f7;"></div>
<div class="a" style="left:553px;top:439px;width:109px;height:27px;background:#f2f3f7;"></div>
<div class="a" style="left:662px;top:439px;width:109px;height:27px;background:#f2f3f7;"></div>
<div class="a" style="left:771px;top:439px;width:109px;height:27px;background:#f2f3f7;"></div>
<div class="a" style="left:880px;top:439px;width:109px;height:27px;background:#f2f3f7;"></div>
<div class="a" style="left:335px;top:440px;width:1px;height:26px;background:#d7dee6;"></div>
<div class="a" style="left:444px;top:440px;width:1px;height:26px;background:#d7dee6;"></div>
<div class="a" style="left:553px;top:440px;width:1px;height:26px;background:#d7dee6;"></div>
<div class="a" style="left:662px;top:440px;width:1px;height:26px;background:#d7dee6;"></div>
<div class="a" style="left:771px;top:440px;width:1px;height:26px;background:#d7dee6;"></div>
<div class="a" style="left:880px;top:440px;width:1px;height:26px;background:#d7dee6;"></div>
<div class="a" style="left:989px;top:440px;width:1px;height:26px;background:#d7dee6;"></div>
<div class="t" style="top:442.00px;font-size:13px;line-height:15px;font-weight:400;color:#0c0c0c;letter-spacing:-0.1px;transform:scaleY(1.07);transform-origin:0 12.00px;left:17px;">P291:Training</div>
<div class="t" style="top:442.00px;font-size:13px;line-height:15px;font-weight:400;color:#0c0c0c;letter-spacing:-0.1px;transform:scaleY(1.07);transform-origin:0 12.00px;left:154px;">5110: Cost of Sales</div>
<div class="t" style="top:442.00px;font-size:13px;line-height:15px;font-weight:400;color:#0c0c0c;letter-spacing:-0.1px;transform:scaleY(1.07);transform-origin:0 12.00px;right:555px;text-align:right;">57.10%</div>
<div class="t" style="top:442.00px;font-size:13px;line-height:15px;font-weight:400;color:#0c0c0c;letter-spacing:-0.1px;transform:scaleY(1.07);transform-origin:0 12.00px;right:446px;text-align:right;">188,019</div>
<div class="t" style="top:442.00px;font-size:13px;line-height:15px;font-weight:400;color:#0c0c0c;letter-spacing:-0.1px;transform:scaleY(1.07);transform-origin:0 12.00px;right:337px;text-align:right;">182,017</div>
<div class="t" style="top:442.00px;font-size:13px;line-height:15px;font-weight:400;color:#0c0c0c;letter-spacing:-0.1px;transform:scaleY(1.07);transform-origin:0 12.00px;right:228px;text-align:right;">195,270</div>
<div class="t" style="top:442.00px;font-size:13px;line-height:15px;font-weight:400;color:#0c0c0c;letter-spacing:-0.1px;transform:scaleY(1.07);transform-origin:0 12.00px;right:119px;text-align:right;">186,017</div>
<div class="t" style="top:442.00px;font-size:13px;line-height:15px;font-weight:400;color:#0c0c0c;letter-spacing:-0.1px;transform:scaleY(1.07);transform-origin:0 12.00px;right:10px;text-align:right;">751,323</div>
<div class="a" style="left:11px;top:493px;width:984px;height:1px;background:#d7dee6;"></div>
<div class="a" style="left:335px;top:467px;width:109px;height:26px;background:#ffffff;"></div>
<div class="a" style="left:444px;top:467px;width:109px;height:26px;background:#f2f3f7;"></div>
<div class="a" style="left:553px;top:467px;width:109px;height:26px;background:#f2f3f7;"></div>
<div class="a" style="left:662px;top:467px;width:109px;height:26px;background:#f2f3f7;"></div>
<div class="a" style="left:771px;top:467px;width:109px;height:26px;background:#f2f3f7;"></div>
<div class="a" style="left:880px;top:467px;width:109px;height:26px;background:#f2f3f7;"></div>
<div class="a" style="left:335px;top:468px;width:1px;height:25px;background:#d7dee6;"></div>
<div class="a" style="left:444px;top:468px;width:1px;height:25px;background:#d7dee6;"></div>
<div class="a" style="left:553px;top:468px;width:1px;height:25px;background:#d7dee6;"></div>
<div class="a" style="left:662px;top:468px;width:1px;height:25px;background:#d7dee6;"></div>
<div class="a" style="left:771px;top:468px;width:1px;height:25px;background:#d7dee6;"></div>
<div class="a" style="left:880px;top:468px;width:1px;height:25px;background:#d7dee6;"></div>
<div class="a" style="left:989px;top:468px;width:1px;height:25px;background:#d7dee6;"></div>
<div class="t" style="top:469.00px;font-size:13px;line-height:15px;font-weight:400;color:#0c0c0c;letter-spacing:-0.1px;transform:scaleY(1.07);transform-origin:0 12.00px;left:17px;">P292:Miscellaneous</div>
<div class="t" style="top:469.00px;font-size:13px;line-height:15px;font-weight:400;color:#0c0c0c;letter-spacing:-0.1px;transform:scaleY(1.07);transform-origin:0 12.00px;left:154px;">5110: Cost of Sales</div>
<div class="t" style="top:469.00px;font-size:13px;line-height:15px;font-weight:400;color:#0c0c0c;letter-spacing:-0.1px;transform:scaleY(1.07);transform-origin:0 12.00px;right:555px;text-align:right;">57.10%</div>
<div class="t" style="top:469.00px;font-size:13px;line-height:15px;font-weight:400;color:#0c0c0c;letter-spacing:-0.1px;transform:scaleY(1.07);transform-origin:0 12.00px;right:446px;text-align:right;">332,840</div>
<div class="t" style="top:469.00px;font-size:13px;line-height:15px;font-weight:400;color:#0c0c0c;letter-spacing:-0.1px;transform:scaleY(1.07);transform-origin:0 12.00px;right:337px;text-align:right;">322,213</div>
<div class="t" style="top:469.00px;font-size:13px;line-height:15px;font-weight:400;color:#0c0c0c;letter-spacing:-0.1px;transform:scaleY(1.07);transform-origin:0 12.00px;right:228px;text-align:right;">345,674</div>
<div class="t" style="top:469.00px;font-size:13px;line-height:15px;font-weight:400;color:#0c0c0c;letter-spacing:-0.1px;transform:scaleY(1.07);transform-origin:0 12.00px;right:119px;text-align:right;">329,295</div>
<div class="t" style="top:469.00px;font-size:13px;line-height:15px;font-weight:400;color:#0c0c0c;letter-spacing:-0.1px;transform:scaleY(1.07);transform-origin:0 12.00px;right:10px;text-align:right;">1,330,022</div>
<div class="a" style="left:147px;top:520px;width:848px;height:1px;background:#d7dee6;"></div>
<div class="a" style="left:335px;top:494px;width:109px;height:26px;background:#f2f3f7;"></div>
<div class="a" style="left:444px;top:494px;width:109px;height:26px;background:#72c7b5;"></div>
<div class="a" style="left:553px;top:494px;width:109px;height:26px;background:#72c7b5;"></div>
<div class="a" style="left:662px;top:494px;width:109px;height:26px;background:#72c7b5;"></div>
<div class="a" style="left:771px;top:494px;width:109px;height:26px;background:#72c7b5;"></div>
<div class="a" style="left:880px;top:494px;width:109px;height:26px;background:#72c7b5;"></div>
<div class="a" style="left:335px;top:495px;width:1px;height:25px;background:#d7dee6;"></div>
<div class="a" style="left:444px;top:495px;width:1px;height:25px;background:#d7dee6;"></div>
<div class="a" style="left:553px;top:495px;width:1px;height:25px;background:#d7dee6;"></div>
<div class="a" style="left:662px;top:495px;width:1px;height:25px;background:#d7dee6;"></div>
<div class="a" style="left:771px;top:495px;width:1px;height:25px;background:#d7dee6;"></div>
<div class="a" style="left:880px;top:495px;width:1px;height:25px;background:#d7dee6;"></div>
<div class="a" style="left:989px;top:495px;width:1px;height:25px;background:#d7dee6;"></div>
<div class="t" style="top:496.00px;font-size:13px;line-height:15px;font-weight:400;color:#0c0c0c;letter-spacing:-0.1px;transform:scaleY(1.07);transform-origin:0 12.00px;left:17px;">Computer Services</div>
<div class="t" style="top:496.00px;font-size:13px;line-height:15px;font-weight:400;color:#0c0c0c;letter-spacing:-0.1px;transform:scaleY(1.07);transform-origin:0 12.00px;left:154px;">5110: Cost of Sales</div>
<div class="t" style="top:496.00px;font-size:13px;line-height:15px;font-weight:400;color:#0c0c0c;letter-spacing:-0.1px;transform:scaleY(1.07);transform-origin:0 12.00px;right:555px;text-align:right;">228.40%</div>
<div class="t" style="top:496.00px;font-size:13px;line-height:15px;font-weight:400;color:#0c0c0c;letter-spacing:-0.1px;transform:scaleY(1.07);transform-origin:0 12.00px;right:446px;text-align:right;">1,710,509</div>
<div class="t" style="top:496.00px;font-size:13px;line-height:15px;font-weight:400;color:#0c0c0c;letter-spacing:-0.1px;transform:scaleY(1.07);transform-origin:0 12.00px;right:337px;text-align:right;">1,655,899</div>
<div class="t" style="top:496.00px;font-size:13px;line-height:15px;font-weight:400;color:#0c0c0c;letter-spacing:-0.1px;transform:scaleY(1.07);transform-origin:0 12.00px;right:228px;text-align:right;">1,776,468</div>
<div class="t" style="top:496.00px;font-size:13px;line-height:15px;font-weight:400;color:#0c0c0c;letter-spacing:-0.1px;transform:scaleY(1.07);transform-origin:0 12.00px;right:119px;text-align:right;">1,692,295</div>
<div class="t" style="top:496.00px;font-size:13px;line-height:15px;font-weight:400;color:#0c0c0c;letter-spacing:-0.1px;transform:scaleY(1.07);transform-origin:0 12.00px;right:10px;text-align:right;">6,835,171</div>
<div class="a" style="left:147px;top:547px;width:848px;height:1px;background:#d7dee6;"></div>
<div class="a" style="left:335px;top:521px;width:109px;height:26px;background:#72c7b5;"></div>
<div class="a" style="left:444px;top:521px;width:109px;height:26px;background:#72c7b5;"></div>
<div class="a" style="left:553px;top:521px;width:109px;height:26px;background:#72c7b5;"></div>
<div class="a" style="left:662px;top:521px;width:109px;height:26px;background:#72c7b5;"></div>
<div class="a" style="left:771px;top:521px;width:109px;height:26px;background:#72c7b5;"></div>
<div class="a" style="left:880px;top:521px;width:109px;height:26px;background:#72c7b5;"></div>
<div class="a" style="left:335px;top:522px;width:1px;height:25px;background:#d7dee6;"></div>
<div class="a" style="left:444px;top:522px;width:1px;height:25px;background:#d7dee6;"></div>
<div class="a" style="left:553px;top:522px;width:1px;height:25px;background:#d7dee6;"></div>
<div class="a" style="left:662px;top:522px;width:1px;height:25px;background:#d7dee6;"></div>
<div class="a" style="left:771px;top:522px;width:1px;height:25px;background:#d7dee6;"></div>
<div class="a" style="left:880px;top:522px;width:1px;height:25px;background:#d7dee6;"></div>
<div class="a" style="left:989px;top:522px;width:1px;height:25px;background:#d7dee6;"></div>
<div class="t" style="top:524.00px;font-size:13px;line-height:15px;font-weight:400;color:#0c0c0c;letter-spacing:-0.1px;transform:scaleY(1.07);transform-origin:0 12.00px;left:154px;">Gross Profit</div>
<div class="t" style="top:524.00px;font-size:13px;line-height:15px;font-weight:400;color:#e8121c;letter-spacing:-0.1px;transform:scaleY(1.07);transform-origin:0 12.00px;right:555px;text-align:right;">(103.31)%</div>
<div class="t" style="top:524.00px;font-size:13px;line-height:15px;font-weight:400;color:#0c0c0c;letter-spacing:-0.1px;transform:scaleY(1.07);transform-origin:0 12.00px;right:446px;text-align:right;">1,285,128</div>
<div class="t" style="top:524.00px;font-size:13px;line-height:15px;font-weight:400;color:#0c0c0c;letter-spacing:-0.1px;transform:scaleY(1.07);transform-origin:0 12.00px;right:337px;text-align:right;">1,244,100</div>
<div class="t" style="top:524.00px;font-size:13px;line-height:15px;font-weight:400;color:#0c0c0c;letter-spacing:-0.1px;transform:scaleY(1.07);transform-origin:0 12.00px;right:228px;text-align:right;">1,334,684</div>
<div class="t" style="top:524.00px;font-size:13px;line-height:15px;font-weight:400;color:#0c0c0c;letter-spacing:-0.1px;transform:scaleY(1.07);transform-origin:0 12.00px;right:119px;text-align:right;">1,271,444</div>
<div class="t" style="top:524.00px;font-size:13px;line-height:15px;font-weight:400;color:#0c0c0c;letter-spacing:-0.1px;transform:scaleY(1.07);transform-origin:0 12.00px;right:10px;text-align:right;">5,135,356</div>
<div class="a" style="left:11px;top:548px;width:984px;height:5px;background:#f7f8fb;"></div>
<div class="a" style="left:11px;top:548px;width:136px;height:1px;background:#d7dee6;"></div>
<div class="a" style="left:11px;top:548px;width:1px;height:5px;background:#d7dee6;"></div>
<div class="a" style="left:147px;top:549px;width:1px;height:4px;background:#d7dee6;"></div>
<div class="a" style="left:335px;top:549px;width:1px;height:4px;background:#d7dee6;"></div>
<div class="a" style="left:444px;top:549px;width:1px;height:4px;background:#d7dee6;"></div>
<div class="a" style="left:553px;top:549px;width:1px;height:4px;background:#d7dee6;"></div>
<div class="a" style="left:662px;top:549px;width:1px;height:4px;background:#d7dee6;"></div>
<div class="a" style="left:771px;top:549px;width:1px;height:4px;background:#d7dee6;"></div>
<div class="a" style="left:880px;top:549px;width:1px;height:4px;background:#d7dee6;"></div>
<div class="a" style="left:989px;top:549px;width:1px;height:4px;background:#d7dee6;"></div>
<div class="a" style="left:990px;top:167px;width:4px;height:386px;background:#fbfcfd;"></div>
<div class="a" style="left:991px;top:167px;width:3px;height:386px;background:#f1f3f7;"></div>
<div class="a" style="left:991px;top:193px;width:3px;height:1px;background:#d9e0e7;"></div>
<div class="a" style="left:991px;top:220px;width:3px;height:1px;background:#d9e0e7;"></div>
<div class="a" style="left:991px;top:247px;width:3px;height:1px;background:#d9e0e7;"></div>
<div class="a" style="left:991px;top:275px;width:3px;height:1px;background:#d9e0e7;"></div>
<div class="a" style="left:991px;top:302px;width:3px;height:1px;background:#d9e0e7;"></div>
<div class="a" style="left:991px;top:329px;width:3px;height:1px;background:#d9e0e7;"></div>
<div class="a" style="left:991px;top:356px;width:3px;height:1px;background:#d9e0e7;"></div>
<div class="a" style="left:991px;top:384px;width:3px;height:1px;background:#d9e0e7;"></div>
<div class="a" style="left:991px;top:411px;width:3px;height:1px;background:#d9e0e7;"></div>
<div class="a" style="left:991px;top:438px;width:3px;height:1px;background:#d9e0e7;"></div>
<div class="a" style="left:991px;top:466px;width:3px;height:1px;background:#d9e0e7;"></div>
<div class="a" style="left:991px;top:493px;width:3px;height:1px;background:#d9e0e7;"></div>
<div class="a" style="left:991px;top:520px;width:3px;height:1px;background:#d9e0e7;"></div>
<div class="a" style="left:991px;top:547px;width:3px;height:1px;background:#d9e0e7;"></div>
<div class="a" style="left:336px;top:247px;width:653px;height:1px;background:#6e6a6a;"></div>
<div id="frame"></div>
</body></html>
